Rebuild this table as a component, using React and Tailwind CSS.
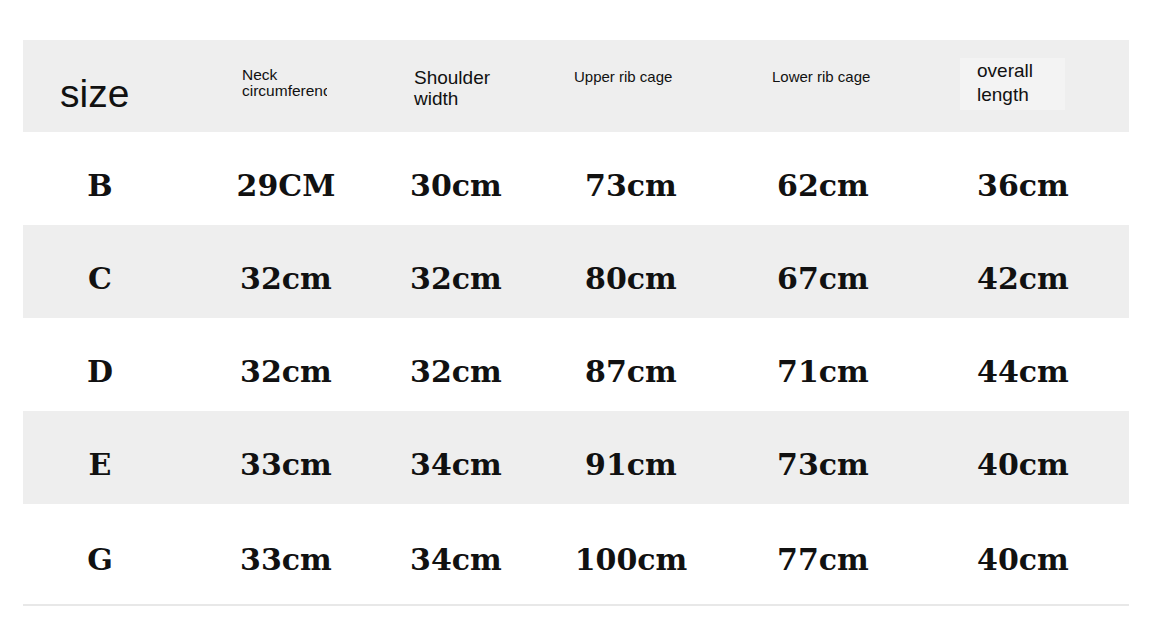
const rows = [
  ['B', '29CM', '30cm', '73cm', '62cm', '36cm'],
  ['C', '32cm', '32cm', '80cm', '67cm', '42cm'],
  ['D', '32cm', '32cm', '87cm', '71cm', '44cm'],
  ['E', '33cm', '34cm', '91cm', '73cm', '40cm'],
  ['G', '33cm', '34cm', '100cm', '77cm', '40cm'],
]

const cols = 'grid grid-cols-[170px_186px_154px_196px_188px_212px]'

export default function App() {
  return (
    <div className="w-[1170px] h-[631px] bg-white pt-[40px] pl-[23px]">
      <div className="w-[1106px]">
        {/* header */}
        <div className={`${cols} h-[92px] bg-[#eeeeee] text-[#111] font-['Liberation_Sans',Arial,sans-serif]`}>
          <div className="pl-[37px] pt-[34px] text-[39px] leading-[40px]">size</div>
          <div className="pl-[49px] pt-[27px]">
            <div className="w-[85px] overflow-hidden whitespace-nowrap text-[15.5px] leading-[16px]">
              Neck
              <br />
              circumference
            </div>
          </div>
          <div className="pl-[35px] pt-[27px] text-[19px] leading-[21px]">
            Shoulder
            <br />
            width
          </div>
          <div className="pl-[41px] pt-[28px] text-[15px] leading-[18px]">Upper rib cage</div>
          <div className="pl-[43px] pt-[28px] text-[15px] leading-[18px]">Lower rib cage</div>
          <div className="pl-[43px] pt-[18px]">
            <div className="w-[105px] h-[52px] bg-[#f3f3f3] pl-[17px] pt-[1px] text-[19px] leading-[24px]">
              overall
              <br />
              length
            </div>
          </div>
        </div>

        {/* rows */}
        {rows.map((r, i) => (
          <div
            key={r[0]}
            className={`${cols} items-center ${i === 4 ? 'h-[100px] pb-[4px]' : 'h-[93px]'} ${
              i % 2 === 1 ? 'bg-[#eeeeee]' : 'bg-white'
            } pt-[15px] text-[#111] font-['DejaVu_Serif','Liberation_Serif',serif] font-bold text-[30px] leading-none`}
          >
            {r.map((c, j) => (
              <div key={j} className={j === 0 ? 'text-center pr-[16px]' : 'text-center'}>
                {c}
              </div>
            ))}
          </div>
        ))}
        <div className="h-[2px] bg-[#e8e8e8]" />
      </div>
    </div>
  )
}
